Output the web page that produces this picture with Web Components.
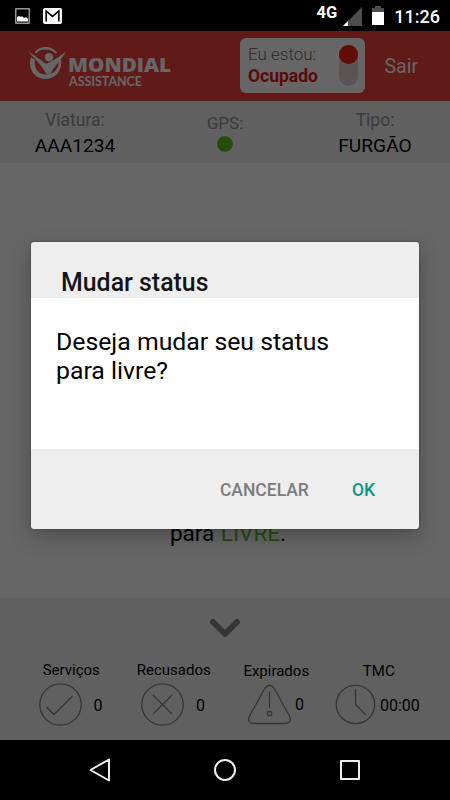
<!DOCTYPE html>
<html lang="pt-BR">
<head>
<meta charset="UTF-8">
<meta name="viewport" content="width=device-width, initial-scale=1">
<title>Mondial Assistance</title>
<style>
    body {
        margin: 0;
        background: #000;
        font-family: Roboto, "Noto Sans", sans-serif;
    }
</style>
</head>
<body>

<app-shell>
    <status-bar slot="top" hora="11:26"></status-bar>

    <app-header status="Ocupado"></app-header>

    <info-bar>
        <info-item label="Viatura:">AAA1234</info-item>
        <gps-item></gps-item>
        <info-item label="Tipo:">FURGÃO</info-item>
    </info-bar>

    <status-message>para <b>LIVRE</b>.</status-message>

    <stats-panel>
        <stat-item label="Serviços" icon="check">0</stat-item>
        <stat-item label="Recusados" icon="cross">0</stat-item>
        <stat-item label="Expirados" icon="alert">0</stat-item>
        <stat-item label="TMC" icon="clock">00:00</stat-item>
    </stats-panel>

    <status-dialog slot="dialog" titulo="Mudar status">
        Deseja mudar seu status<br>para livre?
    </status-dialog>

    <nav-bar slot="bottom"></nav-bar>
</app-shell>

<script>
class BaseElement extends HTMLElement {

    constructor() {
        super();
        this.attachShadow({ mode: 'open' });
    }

    connectedCallback() {
        this.shadowRoot.innerHTML = this.template();
    }
}

class AppShell extends BaseElement {

    template() {
        return `
            <style>
                :host {
                    display: flex;
                    flex-direction: column;
                    width: 450px;
                    height: 800px;
                    overflow: hidden;
                }

                main {
                    position: relative;
                    display: flex;
                    flex-direction: column;
                    height: 709px;
                    background: #fff;
                }

                /* capa escura + diálogo por cima da tela */
                .scrim {
                    position: absolute;
                    inset: 0;
                    background: rgba(0, 0, 0, .6);
                    display: flex;
                    justify-content: center;
                    align-items: flex-start;
                }
            </style>
            <slot name="top"></slot>
            <main>
                <slot></slot>
                <div class="scrim"><slot name="dialog"></slot></div>
            </main>
            <slot name="bottom"></slot>
        `;
    }
}

class StatusBar extends BaseElement {

    template() {
        return `
            <style>
                :host {
                    display: flex;
                    align-items: center;
                    height: 31px;
                    box-sizing: border-box;
                    padding: 0 10px 0 15px;
                    background: #000;
                    color: #fff;
                    font-weight: 500;
                }

                svg { display: block; }
                .gmail { margin-left: 13px; }
                .rede { margin-left: auto; font-size: 16.5px; font-weight: 700; line-height: 16px; margin-bottom: 6px; }
                .sinal { margin: 2px 0 0 6px; }
                .bateria { margin: -1px 0 0 10px; }
                .hora { margin: 3px 0 0 10px; font-size: 18px; line-height: 20px; }
            </style>
            <svg width="15" height="16" viewBox="0 0 15 16">
                <rect x=".8" y=".8" width="13.4" height="14.4" fill="#000" stroke="#bbb" stroke-width="1.2"/>
                <path d="M2 13.5V9l2-1 2 1 1-1 2 2 2-1 2 2v2.500z" fill="#fff"/>
            </svg>
            <svg class="gmail" width="19" height="16" viewBox="0 0 19 16">
                <rect width="19" height="16" rx="2" fill="#fff"/>
                <path d="M3.200 13.500V3.200L9.500 8.500l6.300-5.300v10.300" fill="none" stroke="#000" stroke-width="1.700"/>
            </svg>
            <span class="rede">4G</span>
            <svg class="sinal" width="19" height="19" viewBox="0 0 19 19">
                <path d="M0 19L19 0v19z" fill="#4d4d4d"/>
                <path d="M0 19l5-5v5z" fill="#fff"/>
            </svg>
            <svg class="bateria" width="12" height="19" viewBox="0 0 12 19">
                <path d="M0 2h3V0h6v2h3v5H0z" fill="#4d4d4d"/>
                <path d="M0 6h12v13H0z" fill="#fff"/>
            </svg>
            <span class="hora">${this.getAttribute('hora')}</span>
        `;
    }
}

class MondialLogo extends BaseElement {

    template() {
        return `
            <style>
                :host { display: block; }
                svg { display: block; }
                text { fill: #fff; }
                .nome { font: 800 20px "Open Sans", sans-serif; }
                .sub { font: 700 12.500px Lato, sans-serif; }
            </style>
            <svg width="146" height="46" viewBox="0 0 146 46">
                <path d="M6.500 7.200C9.500 3.400 13 2 17.500 2c5 0 9 2 11.800 5.500l-1.600 1.300C25 6 21.800 4.600 17.500 4.600c-4 0-7 1-9.200 3.600z" fill="#fff"/>
                <path d="M3 12.500C-1 24 7 34 17.500 34 28 34 35.500 24 32.500 13.500l-2 2C31.500 23 26 29.500 17.800 29.500 9.500 29.500 5.500 22 7 14.700z" fill="#fff"/>
                <path d="M0 6.500c8 5 13 8.500 18 12.500 5-2.500 12-6 20-12.500-4.500 8.500-11.500 14-15 21.500-1 .8-3 1.200-5 .6C14 20.500 7 14 0 6.500z" fill="#fff"/>
                <circle cx="21" cy="12.300" r="4.200" fill="#fff"/>
                <text class="nome" x="40" y="26.500" textLength="103" lengthAdjust="spacingAndGlyphs">MONDIAL</text>
                <text class="sub" x="41" y="41" textLength="73" lengthAdjust="spacingAndGlyphs">ASSISTANCE</text>
            </svg>
        `;
    }
}

class AppHeader extends BaseElement {

    template() {
        return `
            <style>
                :host {
                    display: flex;
                    height: 70px;
                    box-sizing: border-box;
                    padding: 7px 31px 8px 28px;
                    background: #f0433c;
                }

                mondial-logo { margin-top: 7px; }

                .status {
                    display: flex;
                    justify-content: space-between;
                    width: 125px;
                    height: 55px;
                    margin-left: 66px;
                    flex-shrink: 0;
                    box-sizing: border-box;
                    padding: 7px 7.500px 7px 8px;
                    border-radius: 6px;
                    background: #fff;
                }

                .label, .valor { display: block; white-space: nowrap; }
                .label { color: #707070; font-size: 17px; font-weight: 300; line-height: 19px; }
                .valor { color: #e0190f; font-size: 17.500px; font-weight: 700; line-height: 24px; }

                .switch {
                    width: 18.500px;
                    height: 41px;
                    border-radius: 10px;
                    background: #e0d5d3;
                }

                .switch::before {
                    content: "";
                    display: block;
                    height: 18.500px;
                    border-radius: 50%;
                    background: #f01e12;
                }

                .sair {
                    margin-left: 19.500px;
                    color: #fff;
                    font-size: 19.500px;
                    line-height: 58px;
                }
            </style>
            <mondial-logo></mondial-logo>
            <div class="status">
                <div>
                    <span class="label">Eu estou:</span>
                    <span class="valor">${this.getAttribute('status')}</span>
                </div>
                <div class="switch"></div>
            </div>
            <span class="sair">Sair</span>
        `;
    }
}

class InfoBar extends BaseElement {

    template() {
        return `
            <style>
                :host {
                    display: grid;
                    grid-template-columns: repeat(3, 1fr);
                    height: 61.500px;
                    background: #f0f0f0;
                }
            </style>
            <slot></slot>
        `;
    }
}

class InfoItem extends BaseElement {

    template() {
        return `
            <style>
                :host {
                    display: block;
                    padding-top: 8px;
                    text-align: center;
                    color: #000;
                    font-size: 19.200px;
                    line-height: 27px;
                }

                .label {
                    display: block;
                    color: #949494;
                    font-size: 17.500px;
                    line-height: 23px;
                }
            </style>
            <span class="label">${this.getAttribute('label')}</span>
            <slot></slot>
        `;
    }
}

class GpsItem extends BaseElement {

    template() {
        return `
            <style>
                :host {
                    display: flex;
                    flex-direction: column;
                    align-items: center;
                    padding-top: 11px;
                    color: #949494;
                    font-size: 17px;
                    line-height: 23px;
                }

                i {
                    width: 16px;
                    height: 16px;
                    border: 1px solid #fff;
                    border-radius: 50%;
                    background: #62c021;
                }
            </style>
            <span>GPS:</span>
            <i></i>
        `;
    }
}

class StatusMessage extends BaseElement {

    template() {
        return `
            <style>
                :host {
                    flex: 1;
                    display: flex;
                    align-items: flex-end;
                    justify-content: center;
                    box-sizing: border-box;
                    padding: 0 0 50px 6px;
                    color: #000;
                    font-size: 22.500px;
                    line-height: 30px;
                }

                ::slotted(b) {
                    margin-left: 1px;
                    color: #62c021;
                    font-weight: 400;
                }
            </style>
            <div><slot></slot></div>
        `;
    }
}

class StatsPanel extends BaseElement {

    template() {
        return `
            <style>
                :host {
                    display: block;
                    height: 142px;
                    box-sizing: border-box;
                    padding: 20px 20px 0;
                    background: #f0f0f0;
                }

                svg { display: block; margin: 0 auto 22px; }

                .stats {
                    display: grid;
                    grid-template-columns: repeat(4, 102.500px);
                }
            </style>
            <svg width="32" height="20" viewBox="0 0 32 20">
                <path d="M4 4l12 12L28 4" fill="none" stroke="#858585" stroke-width="6" stroke-linecap="round" stroke-linejoin="round"/>
            </svg>
            <div class="stats"><slot></slot></div>
        `;
    }
}

const ICONS = {
    check: '<circle cx="21.500" cy="21.500" r="20.700"/><path d="M7.500 24l7.500 7.500L33.500 13"/>',
    cross: '<circle cx="21.500" cy="21.500" r="20.700"/><path d="M12 12l19 19M31 12L12 31"/>',
    alert: '<path d="M17 5Q21.500-.5 26 5l15.500 28q3 7-4.500 7.500h-31Q-1.500 40 1.500 33z"/><path d="M21.500 8.500v16"/><circle cx="21.500" cy="30.500" r="2.200"/>',
    clock: '<circle cx="20.500" cy="21.500" r="19.200"/><path d="M20.500 6v15.500L31 32"/>'
};

class StatItem extends BaseElement {

    template() {
        const icon = this.getAttribute('icon');

        return `
            <style>
                :host {
                    display: block;
                    color: #000;
                    text-align: center;
                }

                .label { padding-top: 1px; font-size: 15px; line-height: 19px; }

                .row {
                    display: flex;
                    align-items: center;
                    height: 44px;
                    padding-left: 18.500px;
                    margin-top: 2px;
                    font-size: 16px;
                }

                svg { flex-shrink: 0; fill: none; stroke: #848484; stroke-width: 1.300; }
                .valor { margin: 2px 0 0 12px; }

                .alert, .clock { padding-top: 2px; }
                .alert + .row, .clock + .row { margin-top: 1px; }
                .alert + .row { padding-left: 22.500px; }
                .alert + .row .valor { margin: 0 0 0 4.500px; }
                .clock + .row { padding-left: 7.500px; }
                .clock + .row .valor { margin-left: 4px; }
            </style>
            <div class="label ${icon}">${this.getAttribute('label')}</div>
            <div class="row">
                <svg width="${icon === 'clock' ? 41 : 43}" height="43">${ICONS[icon]}</svg>
                <span class="valor"><slot></slot></span>
            </div>
        `;
    }
}

class StatusDialog extends BaseElement {

    template() {
        return `
            <style>
                :host {
                    display: block;
                    width: 388px;
                    margin-top: 210.500px;
                    border-radius: 3px;
                    overflow: hidden;
                    background: #eee;
                    box-shadow: 0 8px 20px rgba(0, 0, 0, .25), 0 0 2px rgba(0, 0, 0, .4);
                }

                h2 {
                    height: 56.500px;
                    margin: 0;
                    box-sizing: border-box;
                    padding: 26px 30px 0;
                    color: #151515;
                    font-size: 24.900px;
                    font-weight: 500;
                    line-height: 30px;
                }

                .texto {
                    height: 151px;
                    box-sizing: border-box;
                    padding: 29px 25px;
                    background: #fff;
                    color: #000;
                    font-size: 24.800px;
                    line-height: 29px;
                }

                .acoes {
                    display: flex;
                    justify-content: flex-end;
                    gap: 43px;
                    height: 80px;
                    padding-right: 44px;
                }

                button {
                    padding: 0;
                    border: 0;
                    background: none;
                    color: #7c7c7c;
                    font: 500 17.500px/20px Roboto, sans-serif;
                    padding-top: 2px;
                }

                .ok { color: #0b9688; }
            </style>
            <h2>${this.getAttribute('titulo')}</h2>
            <div class="texto"><slot></slot></div>
            <div class="acoes">
                <button class="cancelar">CANCELAR</button>
                <button class="ok">OK</button>
            </div>
        `;
    }
}

class NavBar extends BaseElement {

    template() {
        return `
            <style>
                :host {
                    display: grid;
                    grid-template-columns: repeat(3, 125px);
                    justify-content: center;
                    place-items: center;
                    height: 60px;
                    background: #000;
                }

                svg {
                    fill: none;
                    stroke: #eee;
                    stroke-width: 2;
                    stroke-linejoin: round;
                }
            </style>
            <svg width="24" height="24"><path d="M21 1.500v21L2.500 12z"/></svg>
            <svg width="24" height="24"><circle cx="12" cy="12" r="10"/></svg>
            <svg width="24" height="24"><rect x="3" y="3" width="18" height="18"/></svg>
        `;
    }
}

customElements.define('mondial-logo', MondialLogo);
customElements.define('status-bar', StatusBar);
customElements.define('app-header', AppHeader);
customElements.define('info-item', InfoItem);
customElements.define('gps-item', GpsItem);
customElements.define('info-bar', InfoBar);
customElements.define('status-message', StatusMessage);
customElements.define('stat-item', StatItem);
customElements.define('stats-panel', StatsPanel);
customElements.define('status-dialog', StatusDialog);
customElements.define('nav-bar', NavBar);
customElements.define('app-shell', AppShell);
</script>
</body>
</html>
